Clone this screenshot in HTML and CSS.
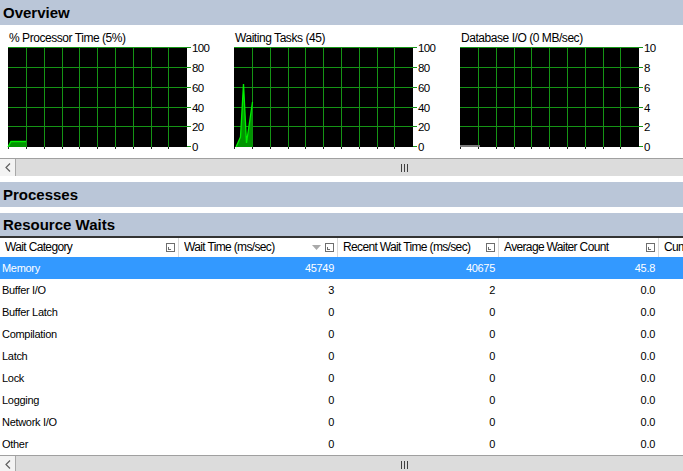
FILE: index.html
```html
<!DOCTYPE html>
<html>
<head>
<meta charset="utf-8">
<link rel="stylesheet" href="styles.css">
</head>
<body>
<div class="bar">Overview</div>
<div class="charts">
  <div class="chart">
    <div class="chart-title">% Processor Time (5%)</div>
    <svg class="plot" width="210" height="103" viewBox="0 0 210 103">
      <rect width="179" height="100" fill="#000"/>
      <path class="gridlines" d="M0 0.5H183M0 20.5H183M0 40.5H183M0 60.5H183M0 79.5H183M179 99.5H183M18.5 0V100M36.5 0V100M54.5 0V100M71.5 0V100M89.5 0V100M107.5 0V100M125.5 0V100M143.5 0V100M160.5 0V100"/>
      <path class="ticks" d="M0.5 100V102M18.5 100V102M36.5 100V102M54.5 100V102M71.5 100V102M89.5 100V102M107.5 100V102M125.5 100V102M143.5 100V102M160.5 100V102"/>
      <polygon class="fill" points="0,100 3,94.5 18,94.5 18,100"/>
      <polyline class="line" points="0,100 3,94.5 18,94.5"/>
      <g class="axis">
        <text x="184" y="0.5">100</text>
        <text x="184" y="20.5">80</text>
        <text x="184" y="40.5">60</text>
        <text x="184" y="60.5">40</text>
        <text x="184" y="79.5">20</text>
        <text x="184" y="99.5">0</text>
      </g>
    </svg>
  </div>
  <div class="chart">
    <div class="chart-title">Waiting Tasks (45)</div>
    <svg class="plot" width="210" height="103" viewBox="0 0 210 103">
      <rect width="179" height="100" fill="#000"/>
      <path class="gridlines" d="M0 0.5H183M0 20.5H183M0 40.5H183M0 60.5H183M0 79.5H183M179 99.5H183M18.5 0V100M36.5 0V100M54.5 0V100M71.5 0V100M89.5 0V100M107.5 0V100M125.5 0V100M143.5 0V100M160.5 0V100"/>
      <path class="ticks" d="M0.5 100V102M18.5 100V102M36.5 100V102M54.5 100V102M71.5 100V102M89.5 100V102M107.5 100V102M125.5 100V102M143.5 100V102M160.5 100V102"/>
      <polygon class="fill" points="2,100 6.5,90 9.5,37 12.5,96 18.5,55 18.5,100"/>
      <polyline class="line" points="2,100 6.5,90 9.5,37 12.5,96 18.5,55"/>
      <g class="axis">
        <text x="184" y="0.5">100</text>
        <text x="184" y="20.5">80</text>
        <text x="184" y="40.5">60</text>
        <text x="184" y="60.5">40</text>
        <text x="184" y="79.5">20</text>
        <text x="184" y="99.5">0</text>
      </g>
    </svg>
  </div>
  <div class="chart">
    <div class="chart-title">Database I/O (0 MB/sec)</div>
    <svg class="plot" width="210" height="103" viewBox="0 0 210 103">
      <rect width="179" height="100" fill="#000"/>
      <path class="gridlines" d="M0 0.5H183M0 20.5H183M0 40.5H183M0 60.5H183M0 79.5H183M179 99.5H183M18.5 0V100M36.5 0V100M54.5 0V100M71.5 0V100M89.5 0V100M107.5 0V100M125.5 0V100M143.5 0V100M160.5 0V100"/>
      <path class="ticks" d="M0.5 100V102M18.5 100V102M36.5 100V102M54.5 100V102M71.5 100V102M89.5 100V102M107.5 100V102M125.5 100V102M143.5 100V102M160.5 100V102"/>
      <path class="zero" d="M0 99H20"/>
      <g class="axis">
        <text x="184" y="0.5">10</text>
        <text x="184" y="20.5">8</text>
        <text x="184" y="40.5">6</text>
        <text x="184" y="60.5">4</text>
        <text x="184" y="79.5">2</text>
        <text x="184" y="99.5">0</text>
      </g>
    </svg>
  </div>
</div>
<div class="hscroll">
  <div class="sb-btn"><svg width="6" height="9" viewBox="0 0 6 9"><path d="M5 0.5L1 4.5L5 8.5" fill="none" stroke="#606060" stroke-width="1.2"/></svg></div>
  <div class="sb-thumb"><svg width="7" height="8" viewBox="0 0 7 8"><path d="M0.5 0V8M3.5 0V8M6.5 0V8" stroke="#404040"/></svg></div>
</div>

<div class="bar bar-gap">Processes</div>
<div class="bar bar-gap bar-rw">Resource Waits</div>

<div class="grid">
  <div class="row head">
    <div class="hcell"><span class="label">Wait Category</span><span class="filter"></span></div>
    <div class="hcell"><span class="label">Wait Time (ms/sec)</span><svg class="sort" width="9" height="5" viewBox="0 0 9 5"><path d="M0 0H9L4.5 5Z" fill="#a9a9a9"/></svg><span class="filter"></span></div>
    <div class="hcell"><span class="label">Recent Wait Time (ms/sec)</span><span class="filter"></span></div>
    <div class="hcell"><span class="label">Average Waiter Count</span><span class="filter"></span></div>
    <div class="hcell"><span class="label">Cumulative Wait Time (sec)</span><span class="filter"></span></div>
  </div>
  <div class="row data sel"><div class="cell">Memory</div><div class="cell num">45749</div><div class="cell num">40675</div><div class="cell num">45.8</div><div class="cell num"></div></div>
  <div class="row data"><div class="cell">Buffer I/O</div><div class="cell num">3</div><div class="cell num">2</div><div class="cell num">0.0</div><div class="cell num"></div></div>
  <div class="row data"><div class="cell">Buffer Latch</div><div class="cell num">0</div><div class="cell num">0</div><div class="cell num">0.0</div><div class="cell num"></div></div>
  <div class="row data"><div class="cell">Compilation</div><div class="cell num">0</div><div class="cell num">0</div><div class="cell num">0.0</div><div class="cell num"></div></div>
  <div class="row data"><div class="cell">Latch</div><div class="cell num">0</div><div class="cell num">0</div><div class="cell num">0.0</div><div class="cell num"></div></div>
  <div class="row data"><div class="cell">Lock</div><div class="cell num">0</div><div class="cell num">0</div><div class="cell num">0.0</div><div class="cell num"></div></div>
  <div class="row data"><div class="cell">Logging</div><div class="cell num">0</div><div class="cell num">0</div><div class="cell num">0.0</div><div class="cell num"></div></div>
  <div class="row data"><div class="cell">Network I/O</div><div class="cell num">0</div><div class="cell num">0</div><div class="cell num">0.0</div><div class="cell num"></div></div>
  <div class="row data"><div class="cell">Other</div><div class="cell num">0</div><div class="cell num">0</div><div class="cell num">0.0</div><div class="cell num"></div></div>
</div>
<div class="hscroll">
  <div class="sb-btn"><svg width="6" height="9" viewBox="0 0 6 9"><path d="M5 0.5L1 4.5L5 8.5" fill="none" stroke="#606060" stroke-width="1.2"/></svg></div>
  <div class="sb-thumb"><svg width="7" height="8" viewBox="0 0 7 8"><path d="M0.5 0V8M3.5 0V8M6.5 0V8" stroke="#404040"/></svg></div>
</div>
</body>
</html>
```

FILE: styles.css
```css
* { box-sizing: border-box; }

body {
  margin: 0;
  width: 683px;
  height: 471px;
  overflow: hidden;
  background: #fff;
  color: #000;
  font-family: "Liberation Sans", Arial, sans-serif;
}

.bar {
  height: 25px;
  line-height: 25px;
  padding-left: 3px;
  background: #bac6d8;
  font-size: 15px;
  font-weight: bold;
  white-space: nowrap;
}

.bar-gap { margin-top: 6px; }

.bar-rw {
  height: 23px;
  line-height: 23px;
}

.charts {
  display: flex;
  height: 133px;
  padding: 6px 0 0 8px;
}

.chart {
  flex: none;
  width: 226px;
}

.chart-title {
  height: 16px;
  line-height: 15px;
  padding-left: 1px;
  font-size: 12px;
  letter-spacing: -0.45px;
  white-space: nowrap;
}

.plot {
  display: block;
  overflow: visible;
}

.gridlines {
  stroke: #159415;
  stroke-width: 1;
  fill: none;
}

.ticks {
  stroke: #202020;
  stroke-width: 1;
}

.fill { fill: #009400; }

.line {
  fill: none;
  stroke: #00f000;
  stroke-width: 1.3;
}

.zero {
  stroke: #7a7a7a;
  stroke-width: 2;
}

.axis text {
  font-family: "Liberation Sans", Arial, sans-serif;
  font-size: 11.5px;
  letter-spacing: -0.7px;
  dominant-baseline: central;
  fill: #000;
}

.hscroll {
  display: flex;
  height: 18px;
  border-top: 1px solid #a0a0a0;
  background: #dcdcdc;
}

.sb-btn {
  flex: none;
  width: 16px;
  display: flex;
  align-items: center;
  justify-content: center;
  background: #f3f3f3;
  border-right: 1px solid #a8a8a8;
}

.sb-thumb {
  flex: 1;
  display: flex;
  align-items: center;
  padding-left: 385px;
}

.sb-thumb svg, .sb-btn svg { display: block; }

.grid {
  width: 683px;
  overflow: hidden;
  border-top: 2px solid #333;
}

.row {
  display: grid;
  grid-template-columns: 179px 159px 161px 160px 140px;
  width: 799px;
}

.head {
  height: 19px;
  font-size: 12px;
  letter-spacing: -0.65px;
}

.hcell {
  display: flex;
  align-items: center;
  gap: 4px;
  padding: 0 3px 0 5px;
  border-right: 1px solid #d9d9d9;
  white-space: nowrap;
  overflow: hidden;
}

.hcell .label {
  flex: 1;
  line-height: 19px;
  overflow: hidden;
}

.filter {
  flex: none;
  position: relative;
  width: 9px;
  height: 9px;
  border: 1px solid #6e6e6e;
  background: #fff;
}

.filter::after {
  content: "";
  position: absolute;
  left: 1px;
  bottom: 1px;
  width: 2px;
  height: 2px;
  border-left: 1px solid #6e6e6e;
  border-bottom: 1px solid #6e6e6e;
}

.sort { flex: none; display: block; }

.data {
  height: 22px;
  line-height: 22px;
  font-size: 11px;
  letter-spacing: -0.3px;
}

.cell {
  padding: 0 4px 0 2px;
  white-space: nowrap;
  overflow: hidden;
}

.num { text-align: right; }

.sel {
  background: #3399ff;
  color: #fff;
}
```
